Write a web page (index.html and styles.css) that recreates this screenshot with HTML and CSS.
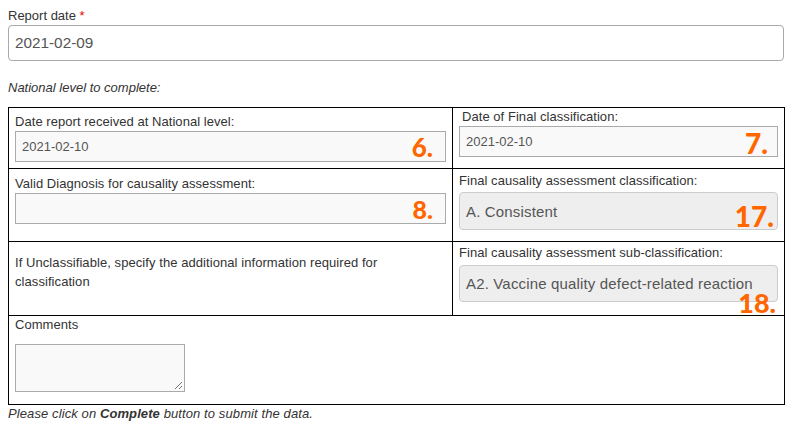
FILE: index.html
```html
<!DOCTYPE html>
<html>
<head>
<meta charset="utf-8">
<link rel="stylesheet" href="styles.css">
</head>
<body>
<div class="field">
  <label class="lbl">Report date <span class="req">*</span></label>
  <div class="main-input">2021-02-09</div>
</div>
<p class="note">National level to complete:</p>
<table class="grid">
  <colgroup><col class="c1"><col class="c2"></colgroup>
  <tr class="r1">
    <td class="cell l1">
      <div class="lbl-sm">Date report received at National level:</div>
      <div class="box ro">2021-02-10<span class="num n6">6.</span></div>
    </td>
    <td class="cell rc1">
      <div class="lbl-sm indent">Date of Final classification:</div>
      <div class="box ro">2021-02-10<span class="num n7">7.</span></div>
    </td>
  </tr>
  <tr class="r2">
    <td class="cell l2">
      <div class="lbl-sm">Valid Diagnosis for causality assessment:</div>
      <div class="box ro"><span class="num n8">8.</span></div>
    </td>
    <td class="cell rc2">
      <div class="lbl-sm">Final causality assessment classification:</div>
      <div class="sel s1">A. Consistent<span class="num n17">17.</span></div>
    </td>
  </tr>
  <tr class="r3">
    <td class="cell l3">If Unclassifiable, specify the additional information required for classification</td>
    <td class="cell rc3">
      <div class="lbl-sm">Final causality assessment sub-classification:</div>
      <div class="sel s2">A2. Vaccine quality defect-related reaction<span class="num n18">18.</span></div>
    </td>
  </tr>
  <tr class="r4">
    <td class="cell l4" colspan="2">
      <div class="lbl-sm">Comments</div>
      <div class="ta"><svg class="grip" width="9" height="9" viewBox="0 0 9 9"><path d="M8 1 L1 8 M8 5 L5 8" stroke="#777" stroke-width="1" fill="none"/></svg></div>
    </td>
  </tr>
</table>
<p class="foot">Please click on <b>Complete</b> button to submit the data.</p>
</body>
</html>
```
FILE: styles.css
```css
html, body { margin: 0; padding: 0; background: #fff; }
body {
  padding: 8px;
  font-family: "Liberation Sans", Arial, sans-serif;
  color: #333;
  font-size: 13px;
}
.field { display: flex; flex-direction: column; }
.lbl { font-size: 13px; line-height: 15px; margin-bottom: 2px; }
.req { color: #e00; }
.main-input {
  height: 36px;
  box-sizing: border-box;
  border: 1px solid #aaa;
  border-radius: 4px;
  padding: 0 6px;
  display: flex;
  align-items: center;
  font-size: 15.3px;
  color: #555;
  width: 776px;
}
.note {
  margin: 19px 0 12px 0;
  font-style: italic;
  font-size: 13px;
  line-height: 15px;
  color: #333;
}
.grid {
  border-collapse: collapse;
  width: 776px;
  border: 1px solid #000;
  table-layout: fixed;
}
.c1 { width: 444px; }
.c2 { width: 332px; }
.cell {
  border: 1px solid #000;
  vertical-align: top;
  padding: 0 6px 0 6px;
  box-sizing: border-box;
}
.lbl-sm { font-size: 13px; line-height: 15px; letter-spacing: 0.05px; }
.indent { padding-left: 3px; }
.r1 .cell { height: 61px; }
.r2 .cell { height: 73px; }
.r3 .cell { height: 74px; }
.r4 .cell { height: 89px; }
.l1 { padding-top: 6px; }
.rc1 { padding-top: 1px; }
.l2 { padding-top: 7px; }
.rc2 { padding-top: 4px; }
.l3 { padding-top: 11px; line-height: 19px; letter-spacing: 0.07px; }
.rc3 { padding-top: 3px; }
.l4 { padding-top: 1px; }
.box {
  position: relative;
  margin-top: 2px;
  height: 31px;
  box-sizing: border-box;
  border: 1px solid #aaa;
  background: #f9f9f9;
  padding: 0 6px;
  display: flex;
  align-items: center;
  font-size: 13px;
  color: #555;
}
.sel {
  position: relative;
  box-sizing: border-box;
  border: 1px solid #ccc;
  border-radius: 4px;
  background: #eee;
  padding: 0 6px;
  display: flex;
  align-items: center;
  font-size: 15px;
  letter-spacing: 0.16px;
  color: #555;
}
.s1 { margin-top: 4px; height: 38px; }
.s2 { margin-top: 5px; height: 37px; }
.num {
  position: absolute;
  font-family: Lato, "Open Sans", sans-serif;
  font-weight: 900;
  color: #ff6600;
  line-height: 1;
  letter-spacing: 0;
}
.n6 { right: 12px; top: 2px; font-size: 26px; }
.n7 { right: 9px; top: 2px; font-size: 28px; }
.n8 { right: 12px; top: 3px; font-size: 25px; }
.n17 { right: 3px; top: 9px; font-size: 28px; }
.n18 { right: 1px; top: 23px; font-size: 27px; }
.ta {
  position: relative;
  margin-top: 12px;
  width: 170px;
  height: 48px;
  box-sizing: border-box;
  border: 1px solid #aaa;
  background: #f9f9f9;
}
.grip { position: absolute; right: 1px; bottom: 1px; }
.foot {
  margin: 1px 0 0 0;
  font-style: italic;
  font-size: 13px;
  line-height: 15px;
  letter-spacing: 0.1px;
  color: #333;
}
```
